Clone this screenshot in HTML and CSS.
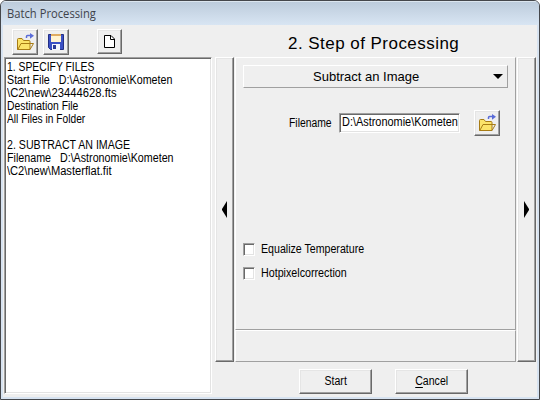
FILE: index.html
```
<!DOCTYPE html>
<html lang="en">
<head>
<meta charset="utf-8">
<title>Batch Processing</title>
<link rel="stylesheet" href="styles.css">
</head>
<body>
<svg class="defs" width="0" height="0">
  <defs>
    <linearGradient id="gold" x1="0" y1="0" x2="0" y2="1"><stop offset="0" stop-color="#fff07c"/><stop offset="1" stop-color="#f0bc1c"/></linearGradient>
    <symbol id="folder" viewBox="0 0 18 18">
      <path d="M1.500 16.500V6.500q0-1 1-1h3.500l1.500 2h5.500q1 0 1 1v8z" fill="#fbe36a" stroke="#a87c14"/>
      <path d="M1.800 16.500 5 10.500h12.500l-3.500 6z" fill="url(#gold)" stroke="#a87c14"/>
      <path d="M10.500 5V3.500q0-1 1-1H15" fill="none" stroke="#5a6cd8" stroke-width="1.500"/>
      <path d="M14 0l4 2.700-4 3z" fill="#5a6cd8"/>
    </symbol>
  </defs>
</svg>
<div class="window">
  <header class="titlebar"><span class="fit title">Batch Processing</span></header>
  <main class="content">
    <section class="left">
      <div class="toolbar">
        <button class="btn tool"><svg width="18" height="18"><use href="#folder"/></svg></button>
        <button class="btn tool save"><svg width="16" height="16" viewBox="0 0 16 16">
          <path d="M.5.5h15v15h-13l-2-2z" fill="#3a50c4" stroke="#222f86"/>
          <path d="M3 1h10v7H3z" fill="#fff3d2"/><path d="M3 0h10v2H3z" fill="#dfab62"/>
          <path d="M4 10h8v6H4z" fill="#f3f5fb"/><path d="M5 11h3v4H5z" fill="#2b3a94"/>
        </svg></button>
        <button class="btn tool new"><svg width="11" height="13" viewBox="0 0 11 13">
          <path d="M.5.5h6.500l3.500 3.500v8.500H.5z" fill="#fff" stroke="#000"/><path d="M6.500.5v4h4" fill="none" stroke="#000"/>
        </svg></button>
      </div>
      <div class="list">
        <div><span class="fit f86">1. SPECIFY FILES</span></div>
        <div><span class="fit f89">Start File   D:\Astronomie\Kometen</span></div>
        <div><span class="fit f94">\C2\new\23444628.fts</span></div>
        <div><span class="fit f86">Destination File</span></div>
        <div><span class="fit f85">All Files in Folder</span></div>
        <div></div>
        <div><span class="fit">2. SUBTRACT AN IMAGE</span></div>
        <div><span class="fit f89">Filename   D:\Astronomie\Kometen</span></div>
        <div><span class="fit f93">\C2\new\Masterflat.fit</span></div>
      </div>
    </section>
    <section class="right">
      <h1>2. Step of Processing</h1>
      <div class="step">
        <button class="btn side"><svg width="5" height="17" viewBox="0 0 5 17"><path d="M5 0v17L0 9V8z"/></svg></button>
        <div class="panel">
          <div class="upper">
            <div class="select"><span>Subtract an Image</span><svg width="10" height="5" viewBox="0 0 10 5"><path d="M0 0h10L5 5z"/></svg></div>
            <div class="filerow">
              <label><span class="fit f86">Filename</span></label>
              <div class="input"><span class="fit f91">D:\Astronomie\Kometen</span></div>
              <button class="btn tool"><svg width="18" height="18"><use href="#folder"/></svg></button>
            </div>
            <div class="checks">
              <label class="check"><i></i><span class="fit">Equalize Temperature</span></label>
              <label class="check"><i></i><span class="fit f89">Hotpixelcorrection</span></label>
            </div>
          </div>
          <div class="lower"></div>
        </div>
        <button class="btn side"><svg width="5" height="17" viewBox="0 0 5 17"><path d="M0 0v17l5-8V8z"/></svg></button>
      </div>
      <div class="actions">
        <button class="btn action"><span>Start</span></button>
        <button class="btn action"><span><u>C</u>ancel</span></button>
      </div>
    </section>
  </main>
</div>
</body>
</html>
```
FILE: styles.css
```
* { box-sizing: border-box; }
body { margin: 0; background: #fff; font: 12px/13px "Liberation Sans", Arial, sans-serif; color: #000; }
.defs { display: none; }
svg { display: block; }
.window {
  width: 540px; height: 400px; padding: 0 2px 2px;
  border: 1px solid #45474b; border-radius: 6px 6px 0 0;
  background: #d7e3f1; overflow: hidden;
}
.titlebar {
  height: 24px; margin: 0 -2px; padding: 5px 0 0 6px;
  background: linear-gradient(#bdccdc, #d8e5f3);
  border-top: 1px solid #dce6ef;
  color: #3f434b;
}
.fit { display: inline-block; white-space: pre; transform: scaleX(.885); transform-origin: 0 50%; }
.title { font: 12px/14px "Open Sans", "Noto Sans", sans-serif; transform: scaleX(.935); }
.f85 { transform: scaleX(.85); }
.f86 { transform: scaleX(.863); }
.f89 { transform: scaleX(.892); }
.f91 { transform: scaleX(.91); }
.f93 { transform: scaleX(.927); }
.f94 { transform: scaleX(.938); }
.content { display: flex; width: 534px; height: 372px; background: #efefef; }
.left { width: 209px; padding-left: 1px; }
.toolbar { display: flex; gap: 5px; height: 32px; padding: 4px 0 0 8px; }
.btn {
  display: flex; align-items: center; justify-content: center; padding: 0;
  border: 1px solid; border-color: #fff #696969 #696969 #fff;
  background: #efefef; color: #000; font: inherit;
  box-shadow: inset -1px -1px #a0a0a0, inset 1px 1px #e5e5e5;
}
.tool { width: 26px; height: 26px; flex: none; }
.new { width: 25px; height: 25px; margin-left: 23px; }
.list {
  height: 337px; padding: 3px 0 0 1.5px; background: #fff;
  border: 1px solid; border-color: #a0a0a0 #fff #fff #a0a0a0;
  box-shadow: inset 1px 1px #696969, inset -1px -1px #e3e3e3;
}
.list div { height: 13px; }
.right { width: 325px; padding-left: 3px; }
h1 {
  height: 32px; margin: 0; padding: 9px 0 0 73px;
  font-size: 17px; line-height: 19px; font-weight: 400; letter-spacing: .46px; white-space: nowrap;
}
.step { display: flex; height: 305px; }
.side { width: 19px; margin-right: 1px; height: 305px; }
.side:last-child { margin: 0 0 0 1px; }
.panel { width: 281px; display: flex; flex-direction: column; }
.upper, .lower { border: 1px solid; border-color: #fff #a0a0a0 #a0a0a0 #fff; }
.upper { height: 273px; padding: 7px 7px 0; }
.lower { height: 32px; }
.select {
  display: flex; align-items: center; height: 23px; padding: 0 4px 0 69px;
  border: 1px solid; border-color: #fff #a0a0a0 #a0a0a0 #fff;
  font-size: 13px;
}
.select svg { margin-left: auto; }
.filerow { display: flex; align-items: center; margin: 22px 0 0 46px; }
.filerow label { width: 50px; padding-top: 1px; }
.input {
  width: 121px; height: 20px; padding: 2px 0 0 2px; overflow: hidden; background: #fff;
  border: 1px solid; border-color: #a0a0a0 #fff #fff #a0a0a0;
  box-shadow: inset 1px 1px #696969, inset -1px -1px #e3e3e3;
}
.filerow .tool { margin-left: 14px; }
.checks { margin-top: 107px; }
.check { display: flex; align-items: center; gap: 6px; height: 13px; margin-bottom: 11px; }
.check i {
  width: 12px; height: 13px; background: #fff;
  border: 1px solid; border-color: #a0a0a0 #fff #fff #a0a0a0;
  box-shadow: inset 1px 1px #696969, inset -1px -1px #e3e3e3;
}
.actions { display: flex; gap: 23px; padding: 7px 0 0 84px; }
.action { width: 73px; height: 25px; }
.action span { transform: scaleX(.88); }
u { text-underline-offset: 2px; }
```
